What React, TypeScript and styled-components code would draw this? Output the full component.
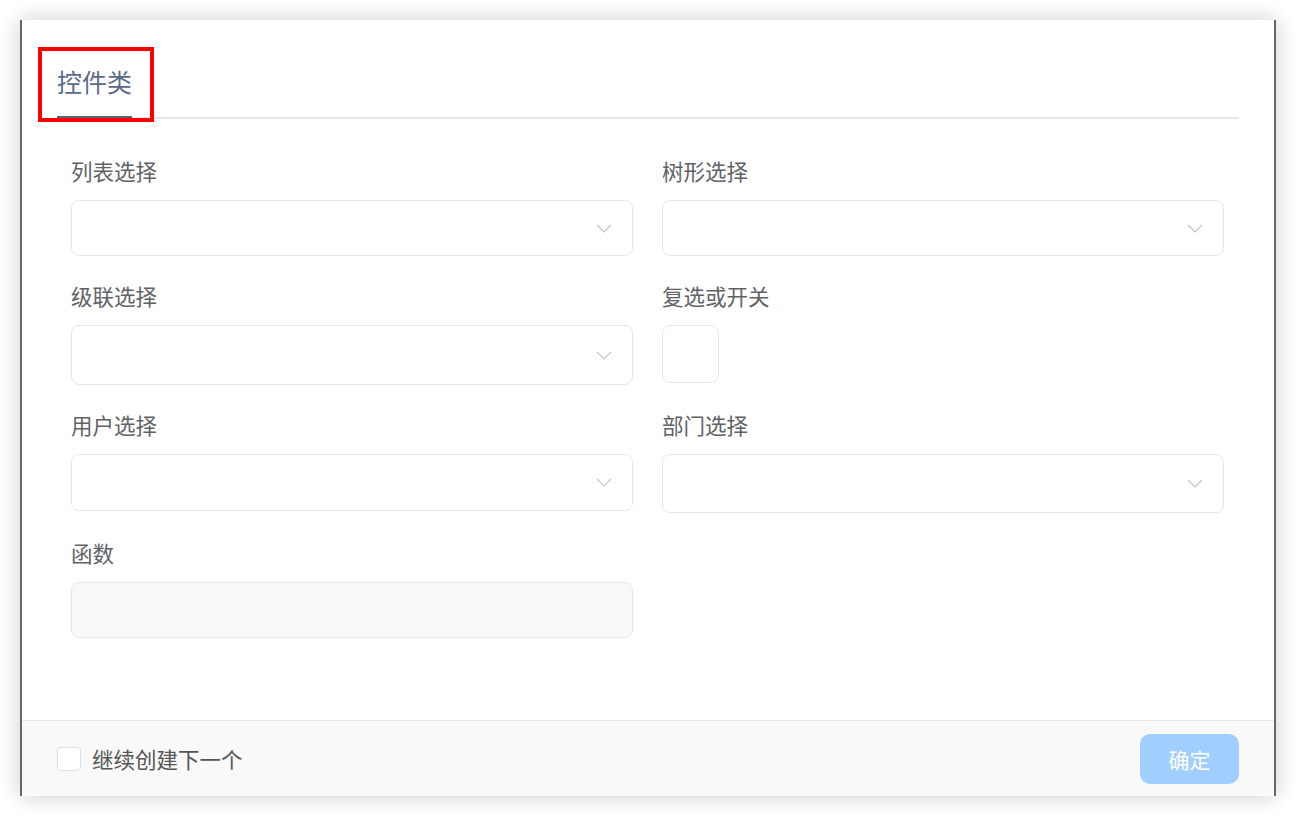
import React, { useState } from 'react';
import styled, { createGlobalStyle } from 'styled-components';

const GlobalStyle = createGlobalStyle`
  html, body {
    margin: 0;
    padding: 0;
    background: #ffffff;
  }
  body {
    font-family: "Noto Sans CJK SC", "Noto Sans", "Liberation Sans", sans-serif;
  }
  * {
    box-sizing: border-box;
  }
`;

const Page = styled.div`
  width: 1296px;
  height: 816px;
  padding: 20px;
  background: #ffffff;
`;

const Modal = styled.div`
  position: relative;
  width: 1256px;
  height: 776px;
  display: flex;
  flex-direction: column;
  background: #ffffff;
  border-left: 2px solid #666666;
  border-right: 2px solid #666666;
  box-shadow: 0 0 22px rgba(0, 0, 0, 0.2);
`;

const TabBar = styled.div`
  margin: 0 35px;
  padding-top: 43px;
  display: flex;
  border-bottom: 2px solid #e4e7ed;
`;

const Tab = styled.div<{ $active?: boolean }>`
  font-size: 25px;
  line-height: 36px;
  color: #5a6a8a;
  padding-bottom: 18px;
  position: relative;

  &::after {
    content: '';
    display: ${p => (p.$active ? 'block' : 'none')};
    position: absolute;
    left: 0;
    right: 0;
    bottom: -1px;
    height: 2px;
    background: #5b6479;
  }
`;

const Marker = styled.div`
  position: absolute;
  left: 16px;
  top: 27px;
  width: 116px;
  height: 75px;
  border: 4px solid #ff0000;
  pointer-events: none;
`;

const Body = styled.div`
  flex: 1;
  padding: 38px 49px 0 49px;
`;

const FormGrid = styled.div`
  display: grid;
  grid-template-columns: 562px 562px;
  column-gap: 29px;
  row-gap: 26px;
  align-items: start;
`;

const FormItem = styled.div`
  display: flex;
  flex-direction: column;
`;

const Label = styled.label`
  font-size: 21.5px;
  line-height: 28px;
  color: #606266;
  margin-bottom: 15px;
`;

const SelectBox = styled.div<{ $h: number }>`
  position: relative;
  height: ${p => p.$h}px;
  border: 1px solid #e4e7ed;
  border-radius: 8px;
  background: #ffffff;
  display: flex;
  align-items: center;
  justify-content: flex-end;
  padding-right: 20px;
`;

const DisabledInput = styled.div`
  height: 56px;
  border: 1px solid #e4e7ed;
  border-radius: 8px;
  background: #f9f9fa;
`;

const SwitchBox = styled.div`
  width: 57px;
  height: 58px;
  border: 1px solid #e4e7ed;
  border-radius: 8px;
  background: #ffffff;
`;

const Footer = styled.div`
  height: 76px;
  border-top: 1px solid #e4e7ed;
  background: #f9f9f9;
  display: flex;
  align-items: center;
  justify-content: space-between;
  padding: 0 35px;
`;

const CheckLabel = styled.label`
  display: flex;
  align-items: center;
  gap: 11px;
  font-size: 21.5px;
  color: #555555;
  cursor: pointer;
`;

const CheckBox = styled.span`
  width: 24px;
  height: 24px;
  border: 1px solid #dcdfe6;
  border-radius: 4px;
  background: #ffffff;
`;

const ConfirmButton = styled.button`
  width: 99px;
  height: 50px;
  border: none;
  border-radius: 10px;
  background: #a0cfff;
  color: #ffffff;
  font-family: inherit;
  font-size: 21px;
  cursor: not-allowed;
`;

const Chevron = () => (
  <svg width="16" height="9" viewBox="0 0 16 9" fill="none">
    <path d="M1 1l7 7 7-7" stroke="#c0c4cc" strokeWidth="1.2" />
  </svg>
);

type Field = { label: string; kind: 'select' | 'switch' | 'disabled'; h?: number };

const fields: Field[] = [
  { label: '列表选择', kind: 'select', h: 56 },
  { label: '树形选择', kind: 'select', h: 56 },
  { label: '级联选择', kind: 'select', h: 60 },
  { label: '复选或开关', kind: 'switch' },
  { label: '用户选择', kind: 'select', h: 57 },
  { label: '部门选择', kind: 'select', h: 59 },
  { label: '函数', kind: 'disabled' },
];

export default function App() {
  const [checked] = useState(false);

  return (
    <Page>
      <GlobalStyle />
      <Modal>
        <TabBar>
          <Tab $active>控件类</Tab>
        </TabBar>
        <Marker />

        <Body>
          <FormGrid>
            {fields.map(f => (
              <FormItem key={f.label}>
                <Label>{f.label}</Label>
                {f.kind === 'select' && (
                  <SelectBox $h={f.h || 56}>
                    <Chevron />
                  </SelectBox>
                )}
                {f.kind === 'switch' && <SwitchBox />}
                {f.kind === 'disabled' && <DisabledInput />}
              </FormItem>
            ))}
          </FormGrid>
        </Body>

        <Footer>
          <CheckLabel>
            <CheckBox data-checked={checked} />
            继续创建下一个
          </CheckLabel>
          <ConfirmButton disabled>确定</ConfirmButton>
        </Footer>
      </Modal>
    </Page>
  );
}
